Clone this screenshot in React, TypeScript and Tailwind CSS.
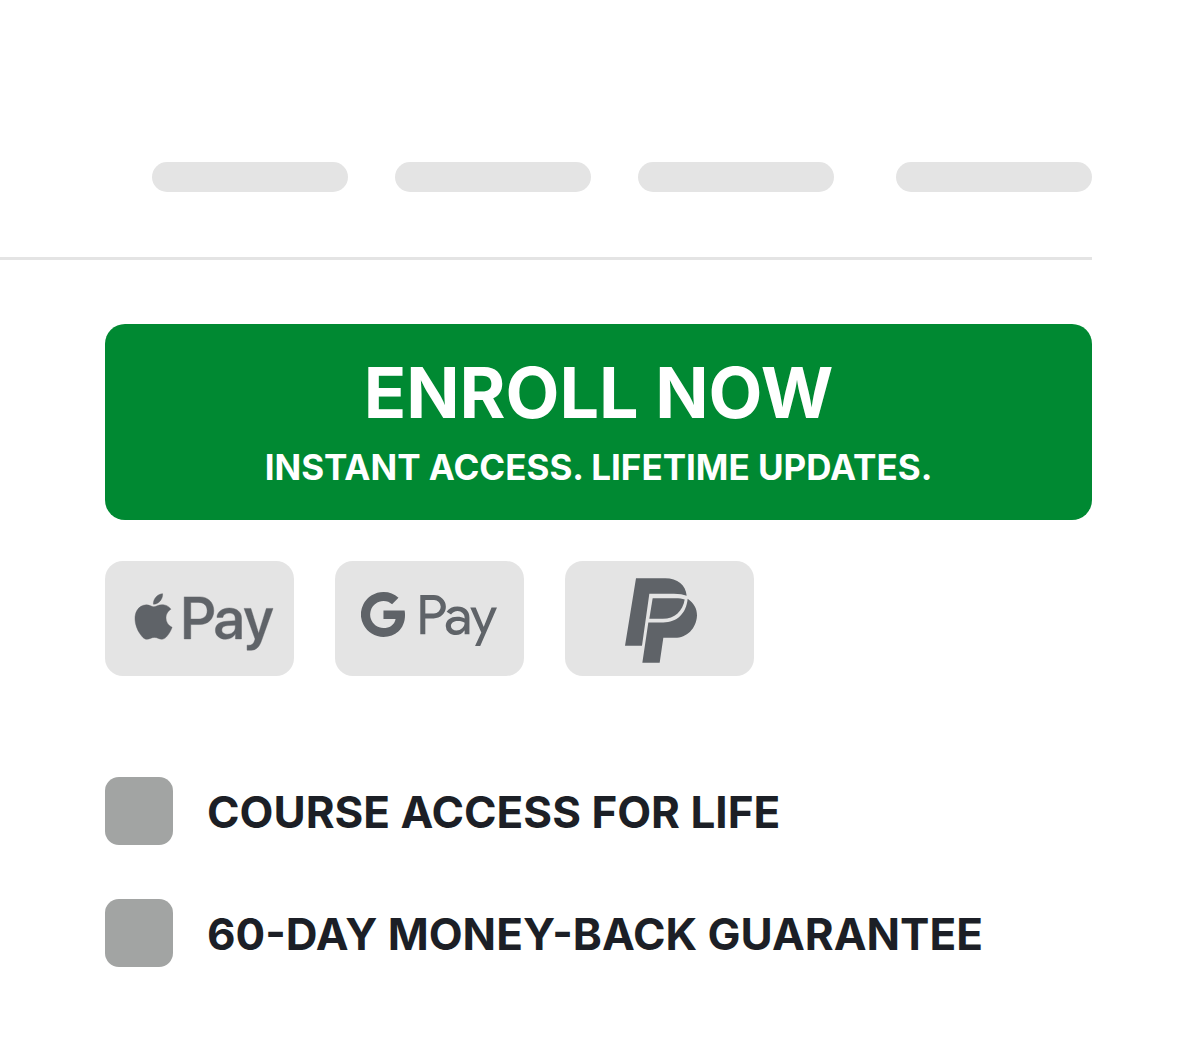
import { FaApplePay } from 'react-icons/fa';
import { SiGooglepay } from 'react-icons/si';

const PayPalIcon = () => (
  <svg viewBox="195 68 216 254" className="h-[85px] w-[72px]" fill="currentColor" role="img" aria-label="PayPal">
    <path d="M228 68H316C352 68 378 88 380 121C370 117 358 115 342 115H268L246 271H195Z" />
    <path d="M278 128H345C358 128 367 129 374 132C369 166 344 190 308 190H268Z" />
    <path d="M265 201H310C350 201 379 175 383 130C402 143 411 160 411 180C409 220 380 247 345 247H310L299 322H247Z" />
  </svg>
);

const guarantees = [
  { id: 'lifetime', label: 'COURSE ACCESS FOR LIFE' },
  { id: 'money-back', label: '60-DAY MONEY-BACK GUARANTEE' },
];

const badge = 'flex h-[115px] w-[189px] items-center justify-center rounded-[18px] bg-[#e4e4e4]';

export default function App() {
  return (
    <main className="min-h-screen bg-white pt-[162px] pr-[108px] pb-[90px] font-['Inter',sans-serif] text-[#1c1f26]">
      <div className="flex gap-[47px] border-b-[3px] border-[#e4e4e4] pb-[65px] pl-[152px]">
        <div className="h-[30px] w-[196px] rounded-full bg-[#e4e4e4]" />
        <div className="h-[30px] w-[196px] rounded-full bg-[#e4e4e4]" />
        <div className="h-[30px] w-[196px] rounded-full bg-[#e4e4e4]" />
        <div className="ml-auto h-[30px] w-[196px] rounded-full bg-[#e4e4e4]" />
      </div>

      <div className="pt-16 pl-[105px]">
        <button
          type="button"
          className="flex w-full flex-col items-center gap-[10px] rounded-[20px] bg-[#008932] py-[29px] font-bold text-white"
        >
          <span className="text-[70px] leading-[80px]">ENROLL NOW</span>
          <span className="text-[35px] leading-[48px]">INSTANT ACCESS. LIFETIME UPDATES.</span>
        </button>

        <div className="mt-[41px] flex gap-[41px] text-[#5f6368]">
          <div className={`${badge} pt-1.5 pl-2`}>
            <FaApplePay
              className="h-[112px] w-[138px] shrink-0 overflow-visible stroke-current stroke-2"
              role="img"
              aria-label="Apple Pay"
            />
          </div>
          <div className={`${badge} pr-0.5`}>
            <SiGooglepay className="size-[136px] shrink-0" role="img" aria-label="Google Pay" />
          </div>
          <div className={`${badge} pt-1 pl-0.5`}>
            <PayPalIcon />
          </div>
        </div>

        <ul className="mt-[101px] flex flex-col gap-[54px]">
          {guarantees.map((item) => (
            <li key={item.id} className="flex items-center gap-[34px]">
              <input
                id={item.id}
                type="checkbox"
                className="size-[68px] shrink-0 appearance-none rounded-[14px] bg-[#a2a4a3]"
              />
              <label htmlFor={item.id} className="pt-[2px] text-[44px] leading-[56px] font-bold">
                {item.label}
              </label>
            </li>
          ))}
        </ul>
      </div>
    </main>
  );
}
